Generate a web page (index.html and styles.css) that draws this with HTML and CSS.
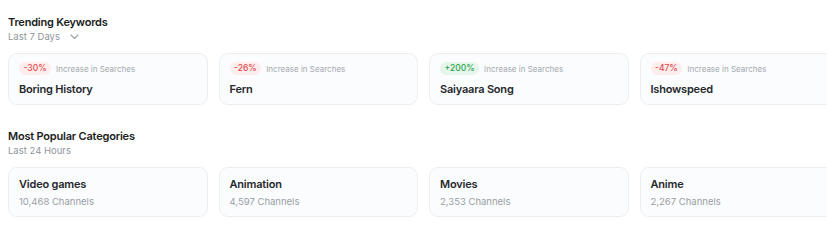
FILE: index.html
```html
<!DOCTYPE html>
<html>
<head>
<meta charset="utf-8">
<link rel="stylesheet" href="styles.css">
</head>
<body>
<div class="page">
  <section class="section">
    <div class="head">
      <h2 class="title">Trending Keywords</h2>
      <div class="sub">Last 7 Days
        <svg class="chev" width="9" height="6" viewBox="0 0 9 6"><path d="M1 1l3.5 3.5L8 1" fill="none" stroke="#9aa0a6" stroke-width="1.1" stroke-linecap="round" stroke-linejoin="round"/></svg>
      </div>
    </div>
    <div class="row">
      <div class="card">
        <div class="meta"><span class="badge down">-30%</span><span class="note">Increase in Searches</span></div>
        <div class="name">Boring History</div>
      </div>
      <div class="card">
        <div class="meta"><span class="badge down">-26%</span><span class="note">Increase in Searches</span></div>
        <div class="name">Fern</div>
      </div>
      <div class="card">
        <div class="meta"><span class="badge up">+200%</span><span class="note">Increase in Searches</span></div>
        <div class="name">Saiyaara Song</div>
      </div>
      <div class="card">
        <div class="meta"><span class="badge down">-47%</span><span class="note">Increase in Searches</span></div>
        <div class="name">Ishowspeed</div>
      </div>
    </div>
  </section>
  <section class="section second">
    <div class="head">
      <h2 class="title">Most Popular Categories</h2>
      <div class="sub">Last 24 Hours</div>
    </div>
    <div class="row">
      <div class="card cat">
        <div class="name">Video games</div>
        <div class="count">10,468 Channels</div>
      </div>
      <div class="card cat">
        <div class="name">Animation</div>
        <div class="count">4,597 Channels</div>
      </div>
      <div class="card cat">
        <div class="name">Movies</div>
        <div class="count">2,353 Channels</div>
      </div>
      <div class="card cat">
        <div class="name">Anime</div>
        <div class="count">2,267 Channels</div>
      </div>
    </div>
  </section>
</div>
</body>
</html>
```
FILE: styles.css
```css
html, body {
  margin: 0;
  padding: 0;
  background: #ffffff;
}
body {
  font-family: Inter, "Open Sans", "Liberation Sans", sans-serif;
  color: #1f2328;
}
.page {
  padding: 14px 4px 0 8px;
  overflow: hidden;
}
.section {
  display: flex;
  flex-direction: column;
}
.second {
  margin-top: 23px;
}
.title {
  margin: 0;
  font-size: 11px;
  line-height: 16px;
  font-weight: 600;
  letter-spacing: -0.2px;
  color: #1a1d21;
}
.sub {
  display: flex;
  align-items: center;
  gap: 10px;
  font-size: 9.5px;
  line-height: 13px;
  color: #8f959b;
}
.chev {
  margin-top: 1px;
}
.row {
  display: flex;
  gap: 11px;
  margin-top: 10px;
  overflow: hidden;
}
.card {
  flex: 0 0 199.5px;
  box-sizing: border-box;
  height: 52px;
  border: 1px solid #eceff2;
  border-radius: 9px;
  background: #fbfcfd;
  padding: 8px 10px 0 10px;
}
.meta {
  display: flex;
  align-items: center;
  gap: 5px;
  height: 13px;
}
.badge {
  font-size: 8.5px;
  line-height: 13px;
  font-weight: 500;
  padding: 0 4.5px;
  border-radius: 7px;
}
.down {
  background: #fdeded;
  color: #e5484d;
}
.up {
  background: #e6f6ea;
  color: #2ea44f;
}
.note {
  font-size: 8px;
  color: #a4a9ae;
}
.name {
  margin-top: 7px;
  font-size: 11px;
  line-height: 15px;
  font-weight: 600;
  letter-spacing: -0.2px;
  color: #25282c;
}
.cat {
  padding-top: 9px;
  height: 50px;
}
.cat .name {
  margin-top: 0;
}
.count {
  margin-top: 4px;
  font-size: 9.5px;
  line-height: 12px;
  color: #989ea4;
}
```
